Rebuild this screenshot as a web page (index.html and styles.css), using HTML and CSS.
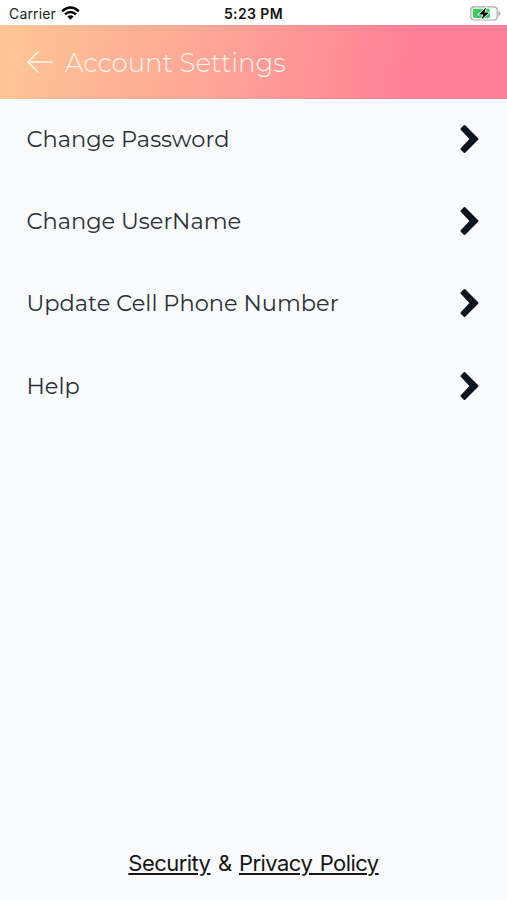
FILE: index.html
```html
<!DOCTYPE html>
<html lang="en">
<head>
<meta charset="utf-8">
<title>Account Settings</title>
<link rel="stylesheet" href="styles.css">
</head>
<body>
<div class="status">
  <div class="carrier"><span>Carrier</span>
    <svg width="19" height="14" viewBox="0 0 19 14" fill="none" stroke="#000" stroke-width="2.5"><path d="M1.2 5.3Q9.5-2.2 17.8 5.3"/><path d="M4 8.4Q9.5 3.5 15 8.4"/><path d="M6.4 10.6Q9.5 8 12.6 10.6L9.5 13.8Z" fill="#000" stroke="none"/></svg>
  </div>
  <div class="clock">5:23 PM</div>
  <svg class="battery" width="31" height="15" viewBox="0 0 31 15"><rect x=".8" y=".8" width="26.4" height="13.2" rx="3.5" fill="#fff" stroke="#aaa" stroke-width="1.2"/><path d="M28.4 4.700v5.600q4-2.800 0-5.600" fill="#aaa"/><rect x="3" y="2.8" width="17" height="9.2" rx="1.5" fill="#35cc5b"/><path d="M16 1.5 8.8 8.4h4.5L11.5 13.5 19 6.5h-4.4Z" fill="#000" stroke="#fff" stroke-width="1.6" paint-order="stroke"/></svg>
</div>
<header class="header">
  <svg width="26" height="22" viewBox="0 0 26 22" fill="none" stroke="#fff4ed" stroke-width="1.7" stroke-linecap="round" stroke-linejoin="round"><path d="M25 11H1M11 1 1 11 11 21"/></svg>
  <h1>Account Settings</h1>
</header>
<main class="list">
  <div class="row"><span>Change Password</span><svg class="chevron" viewBox="0 0 20 30"><path d="M4.500 2 17.500 15 4.500 28 1.500 25 10.800 15 1.500 5Z"/></svg></div>
  <div class="row"><span>Change UserName</span><svg class="chevron" viewBox="0 0 20 30"><path d="M4.500 2 17.500 15 4.500 28 1.500 25 10.800 15 1.500 5Z"/></svg></div>
  <div class="row"><span>Update Cell Phone Number</span><svg class="chevron" viewBox="0 0 20 30"><path d="M4.500 2 17.500 15 4.500 28 1.500 25 10.800 15 1.500 5Z"/></svg></div>
  <div class="row"><span>Help</span><svg class="chevron" viewBox="0 0 20 30"><path d="M4.500 2 17.500 15 4.500 28 1.500 25 10.800 15 1.500 5Z"/></svg></div>
</main>
<footer class="footer"><p><a href="#">Security</a> &amp; <a href="#">Privacy Policy</a></p></footer>
</body>
</html>
```
FILE: styles.css
```css
* { box-sizing: border-box; }
body {
  margin: 0;
  height: 900px;
  display: flex;
  flex-direction: column;
  background: #f9fbfd;
  color: #293037;
  font-family: Montserrat, Inter, sans-serif;
}
.status {
  height: 25px;
  display: grid;
  grid-template-columns: 1fr auto 1fr;
  align-items: center;
  padding: 2px 6px 0 9px;
  background: #fff;
  color: #222;
  font: 14px/23px Inter, sans-serif;
}
.carrier { display: flex; align-items: center; gap: 5px; letter-spacing: 0.15px; }
.carrier svg { margin-top: -2px; }
.clock { margin-left: -3px; color: #111; font-weight: 600; letter-spacing: 0.4px; }
.battery { justify-self: end; }
.header {
  height: 73.5px;
  display: flex;
  align-items: center;
  gap: 12px;
  padding: 1px 0 0 27px;
  background: linear-gradient(100deg, #ffc694 0%, #ffa596 42%, #ff7f96 81%);
}
h1 {
  margin: 0;
  padding-top: 1px;
  color: #fff4ed;
  font-size: 26px;
  font-weight: 300;
}
.list { margin-top: -0.9px; }
.row {
  height: 82.3px;
  display: flex;
  align-items: center;
  justify-content: space-between;
  padding: 0 27px 0 26.5px;
  font-size: 22.5px;
}
.chevron {
  width: 20px;
  height: 30px;
  fill: #0d1620;
  stroke: #0d1620;
  stroke-width: 2;
  stroke-linejoin: round;
}
.footer {
  margin-top: auto;
  height: 75px;
  display: flex;
  justify-content: center;
  color: #161616;
  font: 22px/30px Inter, sans-serif;
  letter-spacing: -0.55px;
  word-spacing: 1.8px;
}
.footer p { margin: 23px 0 0; }
.footer a {
  color: inherit;
  text-decoration-thickness: 1.5px;
  text-underline-offset: 2px;
}
```
